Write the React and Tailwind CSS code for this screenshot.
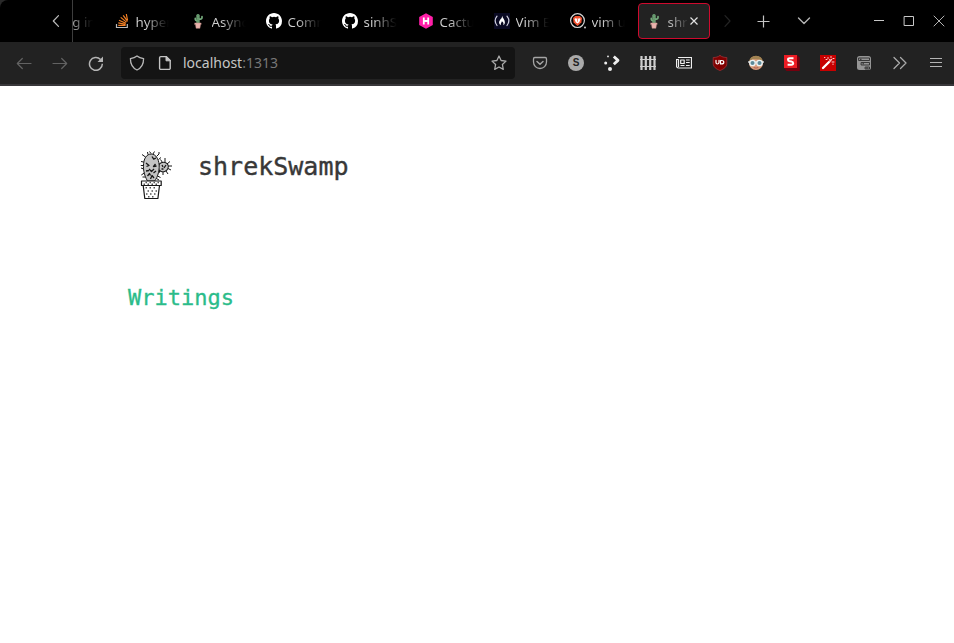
import React from "react";

function Icon({ children, size = 16, box = 16, className = "" }) {
  return (
    <svg width={size} height={size} viewBox={`0 0 ${box} ${box}`} fill="none" stroke="currentColor" strokeWidth="1.2" strokeLinecap="round" strokeLinejoin="round" className={`shrink-0 ${className}`}>
      {children}
    </svg>
  );
}

const StackOverflow = () => (
  <Icon>
    <path d="M2.5 11v3.5h10.8V11" stroke="#bcbbbb" strokeLinecap="butt" strokeLinejoin="miter" />
    <g stroke="#f48024" strokeWidth="1.2" strokeLinecap="butt">
      <path d="M4.2 12.4h7.4M4.300 9.900l7.300 1.400M5 7.200l6.900 3M6.700 4.400l5.800 4.700M9.200 2.300l4.400 6M12.300 1l1.200 6" />
    </g>
  </Icon>
);

const Cactus = () => (
  <Icon>
    <g stroke="#74a97b">
      <path d="M8 2.600v8" strokeWidth="3.300" />
      <path d="M5.300 5.300v1.200q0 1 2 1.200M12 3.500v1.200q0 1.500-3 1.500" strokeWidth="1.700" />
    </g>
    <path d="M8 2v7.500" stroke="#4c7f57" strokeWidth=".8" strokeDasharray="1 1.200" />
    <path d="M4.900 10h6.200v1.600h-.6l-.6 3.700H6.100l-.6-3.700h-.6z" fill="#eab3ad" stroke="#c38d87" strokeWidth=".5" />
  </Icon>
);

const Github = () => (
  <Icon className="text-white">
    <path stroke="none" fill="currentColor" d="M8 0C3.58 0 0 3.58 0 8c0 3.54 2.29 6.53 5.47 7.59.4.07.55-.17.55-.38 0-.19-.01-.82-.01-1.49-2.01.37-2.53-.49-2.69-.94-.09-.23-.48-.94-.82-1.13-.28-.15-.68-.52-.01-.53.63-.01 1.08.58 1.23.82.72 1.21 1.87.87 2.33.66.07-.52.28-.87.51-1.07-1.78-.2-3.64-.89-3.64-3.95 0-.87.31-1.59.82-2.15-.08-.2-.36-1.02.08-2.12 0 0 .67-.21 2.2.82a7.6 7.6 0 0 1 4 0c1.53-1.04 2.2-.82 2.2-.82.44 1.1.16 1.92.08 2.12.51.56.82 1.27.82 2.15 0 3.07-1.87 3.75-3.65 3.95.29.25.54.73.54 1.48 0 1.07-.01 1.93-.01 2.2 0 .21.15.46.55.38A8 8 0 0 0 16 8c0-4.42-3.58-8-8-8z" />
  </Icon>
);

const Hashnode = () => (
  <Icon>
    <path d="M8 .2l6.800 3.700v8.200L8 15.800l-6.800-3.700V3.900z" fill="#ff1fa8" stroke="none" />
    <path d="M5.800 4.500v7M10.200 4.500v7M6 8h4" stroke="#fff" strokeWidth="1.800" strokeLinecap="butt" />
  </Icon>
);

const FreeCode = () => (
  <Icon>
    <path d="M0 0h16v16H0z" fill="#0a0a23" stroke="none" />
    <path d="M3 3.200Q-.7 7.800 3 12.500M13 3.200q3.700 4.600 0 9.300" stroke="#d0d0df" />
    <path d="M8.200 2.800c.3 2.300 3 4.200 2.700 6.700-.1 1.500-.8 2.300-1.700 2.800.7-2.100 0-3.200-1.300-4-.3 1.600-1.700 2.200-.9 4-2.300-.9-2.500-3.400-1-5.200 1-1.300 2.200-2.400 2.200-4.300z" fill="#fff" stroke="none" />
  </Icon>
);

const Brave = () => (
  <Icon>
    <circle cx="7.500" cy="7.600" r="6.900" stroke="#d5d5d5" />
    <path d="M5.200 3h4.600l2.200 2-.6 4.500-3.900 3.600-3.900-3.600L3 5z" fill="#f0502e" stroke="none" />
    <path d="M5 5.200l2.500.6 2.500-.6.5 1.100-1.300 3-1.700 1.300-1.700-1.300-1.300-3z" fill="#fff" stroke="none" />
    <path d="M7.500 6.400v2" stroke="#f0502e" strokeWidth=".7" />
    <circle cx="15" cy="14.500" r=".9" fill="#ddd" stroke="none" />
  </Icon>
);

const tabs = [
  { title: "hyper", icon: <StackOverflow /> },
  { title: "Async", icon: <Cactus /> },
  { title: "Comm", icon: <Github /> },
  { title: "sinhSa", icon: <Github /> },
  { title: "Cactus", icon: <Hashnode /> },
  { title: "Vim En", icon: <FreeCode /> },
  { title: "vim un", icon: <Brave /> },
];

function TabBar() {
  return (
    <header className="flex h-[42px] items-center rounded-tl-lg bg-black text-[#c8c8c8]">
      <div className="flex h-full w-[73px] shrink-0 items-center justify-end border-r border-[#3d3d3d] pr-2">
        <Icon className="text-[#bdbdbd]"><path d="M10.5 2.7L5.3 8l5.2 5.3" /></Icon>
      </div>
      <div className="flex h-full w-[33px] shrink-0 items-center overflow-hidden">
        <span className="-ml-[9px] mt-[2px] w-[29px] overflow-hidden whitespace-nowrap bg-gradient-to-r from-[#aaa] from-30% to-black to-110% bg-clip-text text-[13.33px] leading-5 text-transparent">ng in</span>
      </div>
      {tabs.map((t) => (
        <div key={t.title} className="flex h-full w-[76px] shrink-0 items-center gap-[5.5px] pl-2">
          {t.icon}
          <span className="mt-[2px] w-[34px] overflow-hidden whitespace-nowrap bg-gradient-to-r from-[#d0d0d0] from-30% to-black to-105% bg-clip-text text-[13.33px] leading-5 text-transparent">{t.title}</span>
        </div>
      ))}
      <div className="flex h-9 w-[72px] shrink-0 items-center rounded border border-[#cf0a2e] bg-[#222] pl-[7px]">
        <Cactus />
        <span className="ml-[5.5px] mt-[2px] w-[19.5px] overflow-hidden whitespace-nowrap bg-gradient-to-r from-[#bbb] from-20% to-[#333] bg-clip-text text-[13.33px] leading-5 text-transparent">shre</span>
        <Icon className="-ml-px text-[#e2e2e2]"><path d="M4.5 4.5l7 7M11.5 4.5l-7 7" strokeLinecap="butt" /></Icon>
      </div>
      <Icon className="ml-[9px] text-[#242424]"><path d="M6 2.700L11 8l-5 5.300" /></Icon>
      <Icon className="ml-[21px] text-[#c4c4c4]"><path d="M7.500 2.500v12M1.500 8.500h12" strokeLinecap="butt" /></Icon>
      <Icon className="ml-[24px] text-[#b4b4b4]"><path d="M2.500 5L8 10.500 13.500 5" strokeWidth="1.400" /></Icon>
      <div className="ml-auto flex gap-[14px] pr-[7px]">
        <Icon><path d="M3 7.500h10" strokeWidth="1" strokeLinecap="butt" /></Icon>
        <Icon><path d="M3.500 3.500h9v9h-9z" strokeWidth="1" strokeLinejoin="miter" /></Icon>
        <Icon><path d="M3 3l10 10M13 3L3 13" strokeWidth=".9" /></Icon>
      </div>
    </header>
  );
}

const extensions = [
  <Icon key="pocket" className="text-[#a5a5a5]"><path d="M2.800 2.500h10.400a1.400 1.400 0 0 1 1.300 1.400V7a6.500 6.500 0 0 1-13 0V3.900a1.400 1.400 0 0 1 1.300-1.400z" strokeWidth="1.300" /><path d="M5 6.500l3 2.800 3-2.800" strokeWidth="1.500" /></Icon>,
  <span key="s" className="flex h-4 w-4 items-center justify-center rounded-full bg-[#aaa] font-['Liberation_Sans',sans-serif] text-[10px] font-bold leading-none text-[#222]">S</span>,
  <Icon key="dots" className="text-[#eee]"><g stroke="none" fill="currentColor"><circle cx="4" cy="1.400" r=".9" /><circle cx="1.700" cy="8" r="1.500" /><circle cx="6" cy="14" r="2" /></g><path d="M9.800 1.500l4.200 3.900-4.200 3.900" strokeWidth="2.800" strokeLinecap="butt" /></Icon>,
  <Icon key="fence" className="text-[#cecece]"><path d="M1.500 1v14M5.800 1v14M10.200 1v14M14.500 1v14" strokeWidth="2.200" strokeLinecap="butt" /><path d="M0 4.500h16M0 11.500h16" strokeWidth="1.200" /></Icon>,
  <Icon key="news" className="text-[#eee]"><path d="M2.500 2.500h13v10.500h-13a2 2 0 0 1-2-2V4.500h2v7" strokeWidth="1.200" /><path d="M4.700 5h3.500v3.500H4.700zM10 5h3.700M10 7.500h3.700M4.500 10.500h4M10 10.500h3.700" strokeWidth="1.200" strokeLinecap="butt" /></Icon>,
  <Icon key="ublock"><path d="M8 .5c2 1.500 4 2 6.800 2v6c0 3.500-3 5.500-6.800 7-3.800-1.500-6.800-3.500-6.800-7v-6C4 2.500 6 2 8 .5z" fill="#800000" stroke="#a23036" strokeWidth=".8" /><path d="M4 5.300V7.500q0 1.500 1.400 1.500T7 7.500V5.300M8.500 5.500v3.400h1.200q2.100 0 2.100-1.700t-2.100-1.700z" stroke="#fff" strokeWidth="1.200" /></Icon>,
  <Icon key="face"><circle cx="8" cy="8" r="7" fill="#d99c7b" stroke="none" /><path d="M1 7Q2 .8 8 .8T15 7L11 4.500 5 4z" fill="#a18352" stroke="none" /><path d="M.5 7h15" stroke="#ddd" strokeWidth="1.500" /><g fill="#5c8998" stroke="#edf3f4" strokeWidth="1.300"><circle cx="4.500" cy="8" r="2.700" /><circle cx="11.500" cy="8" r="2.700" /></g><path d="M6 12.700q2 1 4 0" stroke="#a85e55" strokeWidth="1" /></Icon>,
  <Icon key="stylus"><path d="M0 13h13V0l2.700 2.500V16H2.500z" fill="#75000e" stroke="none" /><path d="M0 0h13v13H0z" fill="#ed1c24" stroke="none" /><path d="M9.500 3.300H5.700q-1.700 0-1.700 1.400t1.700 1.600l1.600.2q1.900.3 1.900 1.700t-1.900 1.500H3.600" stroke="#fff" strokeWidth="2" strokeLinecap="butt" /></Icon>,
  <Icon key="wand"><path d="M0 0h16v16H0z" fill="#c80000" stroke="none" /><path d="M3 13l6.300-6.300" stroke="#fff" strokeWidth="2.300" /><path d="M9.500 6.500l2-2" stroke="#ffc5c5" strokeWidth="1.500" /><path d="M6 4.500h1M8 2.500v1M11 1.500v1M13 3.500h1M12 7h2M9.500 4.300l.5.500M13 9v.5M4.500 2.500h.4" stroke="#ffd1d1" strokeWidth="1" /></Icon>,
  <Icon key="panel"><rect x="1" y="1" width="14" height="14" rx="2.500" fill="#959595" stroke="none" /><path d="M3 3h10.500v2.500H3zM5.500 7.500h8V10h-8zM9.500 12h4v2h-4z" fill="#959595" stroke="#2c2c2c" strokeWidth=".9" /><path d="M4 4.300h1.500M6.500 8.800H8M11 12v2" stroke="#2c2c2c" strokeWidth="1" strokeLinecap="butt" /></Icon>,
  <Icon key="more" className="text-[#aaa]"><path d="M2 2.500L7.500 8 2 13.500M8.500 2.500L14 8l-5.500 5.500" strokeWidth="1.300" /></Icon>,
  <Icon key="menu" className="text-[#b4b4b4]"><path d="M2 3.500h12M2 7.500h12M2 11.500h12" strokeWidth="1" strokeLinecap="butt" /></Icon>,
];

function Toolbar() {
  return (
    <nav className="flex h-[44px] items-center border-b-2 border-[#38373a] bg-[#222]">
      <div className="flex pl-[6px]">
        <span className="flex w-9 justify-center"><Icon className="text-[#626262]"><path d="M15 8.500H1.500M6.300 3.500l-5 5 5 5" strokeWidth="1.200" /></Icon></span>
        <span className="flex w-9 justify-center"><Icon className="text-[#626262]"><path d="M1 8.500h13.500M9.700 3.500l5 5-5 5" strokeWidth="1.200" /></Icon></span>
        <span className="flex w-9 justify-center"><Icon className="text-[#b5b5b5]"><path d="M14.300 8.800A6.400 6.400 0 1 1 12.500 4.500" strokeWidth="1.500" strokeLinecap="butt" /><path d="M15 1.500V7H9.500z" fill="currentColor" stroke="none" /></Icon></span>
      </div>
      <div className="mx-[7px] flex h-8 flex-1 items-center rounded bg-[#141414] px-2">
        <Icon className="text-[#b8b8b8]"><path d="M8 1c2 1.600 4.200 2.200 6.600 2.600 0 5.200-1.600 9.300-6.600 11.400C3 12.900 1.400 8.800 1.400 3.600 3.800 3.200 6 2.600 8 1z" strokeWidth="1.300" /></Icon>
        <Icon className="ml-3 text-[#c4c4c4]"><path d="M3.800 1.600h5.400l4 4v7.600a1.200 1.200 0 0 1-1.200 1.200H3.800a1.200 1.200 0 0 1-1.200-1.200V2.800a1.200 1.200 0 0 1 1.200-1.200z" strokeWidth="1.400" /><path d="M9 1.500v4.300h4.300z" fill="currentColor" strokeWidth="1" /></Icon>
        <span className="ml-[10px] text-[14px] leading-5 text-[#c6c6c6]">localhost<span className="text-[#777]">:1313</span></span>
        <Icon className="ml-auto text-[#aaa]"><path d="M8 1l2.100 4.500 4.900.6-3.600 3.400.9 4.900L8 12l-4.300 2.400.9-4.900L1 6.100l4.900-.6z" strokeWidth="1.300" /></Icon>
      </div>
      <div className="flex">
        {extensions.map((icon, i) => (
          <span key={i} className="flex w-9 items-center justify-center">{icon}</span>
        ))}
      </div>
    </nav>
  );
}

function CactusLogo() {
  return (
    <svg width="50" height="50" viewBox="0 0 50 50" fill="none" stroke="#171717" strokeWidth="1" strokeLinejoin="round">
      <ellipse cx="35.200" cy="17" rx="5.200" ry="4.700" fill="#c4c4c4" transform="rotate(-25 35.200 17)" />
      <path d="M19.500 31C16 25 14.500 18 16 11 17.500 5 22 2.500 26.500 5c4.800 3.500 5.500 11 4 17.500-.8 3.700-2.300 6.500-3.900 8.500z" fill="#c4c4c4" />
      <path d="M17.500 7L14 4.500M20 4.500l-.5-2.500M23 3.500l-1.500-2M25 4l1.500-2.500M28.500 6.500L31 4V2M30.500 9.500l2.500-2M15.700 12l-2.700-.5M15.500 15.500h-2.700M15.700 19l-2.700-1M16.300 23l-3 2M17.500 27h-3M29.500 26l3 1.500M28.500 28.500l2.500 1.500" />
      <path d="M34.500 12.500l-2-3M37 12V8M39 14l3-2.500M40 16h4M40 18.500l3 1.500M38 21l2 3M35 22v3M32 20l-1 3" />
      <path d="M24 6.500l1.700 2.700L28 8M18 13l3 2.500-2.500 1M27.500 14l-2 2.500 3-.5M18 21l3-.5M21 19l2.500 2.500L26 19M28 21l-2.500 2M19.500 26l2-2.500 1 2M22.500 29l1.500-3.500 2 2.500M34 15l1 2M38 15l-2 3M33.500 19h2" strokeWidth="1.300" />
      <path d="M13.500 31h19.700v4.500H13.500z" fill="#fff" strokeWidth="1.200" />
      <path d="M15.200 35.500h16.300l-1.600 13H16.800z" fill="#fff" strokeWidth="1.200" />
      <path d="M15.500 34.300h16M17.500 32.600h14M17.500 37.800h12M19.500 41h10M18 44h11M20 46.700h8" stroke="#555" strokeWidth="1.500" strokeDasharray="1.500 2.500" />
    </svg>
  );
}

export default function App() {
  return (
    <div className="flex h-[643px] w-[954px] flex-col overflow-hidden bg-[#292929] font-['Noto_Sans',sans-serif]">
      <TabBar />
      <Toolbar />
      <main className="flex-1 bg-white pl-32 pt-16 font-['DejaVu_Sans_Mono',monospace]">
        <div className="flex h-[50px] items-start gap-5">
          <CactusLogo />
          <h1 className="mt-px text-[25px] leading-[32px] text-[#383838] [-webkit-text-stroke:0.4px_#383838]">shrekSwamp</h1>
        </div>
        <h2 className="mt-[83px] text-[22px] leading-[30px] text-[#2bbc8a] [-webkit-text-stroke:0.3px_#2bbc8a]">Writings</h2>
      </main>
    </div>
  );
}
